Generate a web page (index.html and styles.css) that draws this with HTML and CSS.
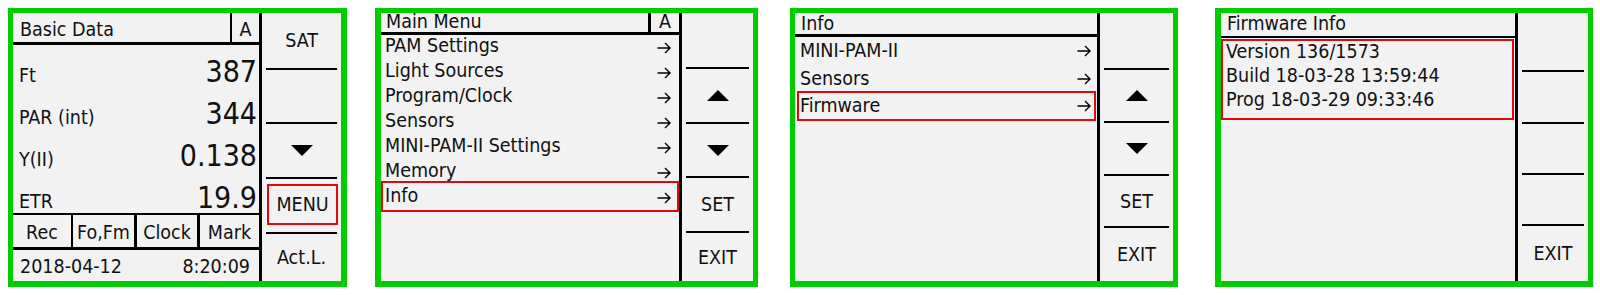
FILE: index.html
```html
<!DOCTYPE html>
<html>
<head>
<meta charset="utf-8">
<link rel="stylesheet" href="styles.css">
</head>
<body>
<div class="screens">
  <div class="panel p1">
    <div class="main">
      <div class="head"><span class="title">Basic Data</span><span class="mode">A</span></div>
      <div class="data">
        <div class="drow"><span class="lbl">Ft</span><span class="val">387</span></div>
        <div class="drow"><span class="lbl">PAR (int)</span><span class="val">344</span></div>
        <div class="drow"><span class="lbl">Y(II)</span><span class="val">0.138</span></div>
        <div class="drow"><span class="lbl">ETR</span><span class="val">19.9</span></div>
      </div>
      <div class="btns"><span class="b1">Rec</span><span class="b2">Fo,Fm</span><span class="b3">Clock</span><span class="b4">Mark</span></div>
      <div class="status"><span>2018-04-12</span><span>8:20:09</span></div>
    </div>
    <div class="side">
      <div class="slot">SAT</div><div class="sep"></div>
      <div class="slot"></div><div class="sep"></div>
      <div class="slot"><svg class="tri" width="22" height="11" viewBox="0 0 22 11"><polygon points="0,0 22,0 11,11" fill="#000"/></svg></div><div class="sep"></div>
      <div class="slot"><div class="hl-btn">MENU</div></div><div class="sep"></div>
      <div class="slot">Act.L.</div>
    </div>
  </div>

  <div class="panel p2">
    <div class="main">
      <div class="head"><span class="title">Main Menu</span><span class="mode">A</span></div>
      <div class="list">
        <div class="item"><span>PAM Settings</span><svg class="arr" width="14" height="12" viewBox="0 0 14 12"><path d="M0.5 6H13 M8 1L13 6L8 11" fill="none" stroke="#000" stroke-width="1.4"/></svg></div>
        <div class="item"><span>Light Sources</span><svg class="arr" width="14" height="12" viewBox="0 0 14 12"><path d="M0.5 6H13 M8 1L13 6L8 11" fill="none" stroke="#000" stroke-width="1.4"/></svg></div>
        <div class="item"><span>Program/Clock</span><svg class="arr" width="14" height="12" viewBox="0 0 14 12"><path d="M0.5 6H13 M8 1L13 6L8 11" fill="none" stroke="#000" stroke-width="1.4"/></svg></div>
        <div class="item"><span>Sensors</span><svg class="arr" width="14" height="12" viewBox="0 0 14 12"><path d="M0.5 6H13 M8 1L13 6L8 11" fill="none" stroke="#000" stroke-width="1.4"/></svg></div>
        <div class="item"><span>MINI-PAM-II Settings</span><svg class="arr" width="14" height="12" viewBox="0 0 14 12"><path d="M0.5 6H13 M8 1L13 6L8 11" fill="none" stroke="#000" stroke-width="1.4"/></svg></div>
        <div class="item"><span>Memory</span><svg class="arr" width="14" height="12" viewBox="0 0 14 12"><path d="M0.5 6H13 M8 1L13 6L8 11" fill="none" stroke="#000" stroke-width="1.4"/></svg></div>
        <div class="item sel"><span>Info</span><svg class="arr" width="14" height="12" viewBox="0 0 14 12"><path d="M0.5 6H13 M8 1L13 6L8 11" fill="none" stroke="#000" stroke-width="1.4"/></svg></div>
      </div>
    </div>
    <div class="side">
      <div class="slot"></div><div class="sep"></div>
      <div class="slot"><svg class="tri" width="22" height="11" viewBox="0 0 22 11"><polygon points="0,11 22,11 11,0" fill="#000"/></svg></div><div class="sep"></div>
      <div class="slot"><svg class="tri" width="22" height="11" viewBox="0 0 22 11"><polygon points="0,0 22,0 11,11" fill="#000"/></svg></div><div class="sep"></div>
      <div class="slot">SET</div><div class="sep"></div>
      <div class="slot">EXIT</div>
    </div>
  </div>

  <div class="panel p3">
    <div class="main">
      <div class="head"><span class="title">Info</span></div>
      <div class="list">
        <div class="item"><span>MINI-PAM-II</span><svg class="arr" width="14" height="12" viewBox="0 0 14 12"><path d="M0.5 6H13 M8 1L13 6L8 11" fill="none" stroke="#000" stroke-width="1.4"/></svg></div>
        <div class="item"><span>Sensors</span><svg class="arr" width="14" height="12" viewBox="0 0 14 12"><path d="M0.5 6H13 M8 1L13 6L8 11" fill="none" stroke="#000" stroke-width="1.4"/></svg></div>
        <div class="item sel"><span>Firmware</span><svg class="arr" width="14" height="12" viewBox="0 0 14 12"><path d="M0.5 6H13 M8 1L13 6L8 11" fill="none" stroke="#000" stroke-width="1.4"/></svg></div>
      </div>
    </div>
    <div class="side">
      <div class="slot"></div><div class="sep"></div>
      <div class="slot"><svg class="tri" width="22" height="11" viewBox="0 0 22 11"><polygon points="0,11 22,11 11,0" fill="#000"/></svg></div><div class="sep"></div>
      <div class="slot"><svg class="tri" width="22" height="11" viewBox="0 0 22 11"><polygon points="0,0 22,0 11,11" fill="#000"/></svg></div><div class="sep"></div>
      <div class="slot">SET</div><div class="sep"></div>
      <div class="slot">EXIT</div>
    </div>
  </div>

  <div class="panel p4">
    <div class="main">
      <div class="head"><span class="title">Firmware Info</span></div>
      <div class="fwbox">
        <div class="fwline">Version 136/1573</div>
        <div class="fwline">Build 18-03-28 13:59:44</div>
        <div class="fwline">Prog 18-03-29 09:33:46</div>
      </div>
    </div>
    <div class="side">
      <div class="slot"></div><div class="sep"></div>
      <div class="slot"></div><div class="sep"></div>
      <div class="slot"></div><div class="sep"></div>
      <div class="slot"></div><div class="sep"></div>
      <div class="slot">EXIT</div>
    </div>
  </div>
</div>
</body>
</html>
```

FILE: styles.css
```css
body {
  margin: 0;
  background: #ffffff;
  font-family: "DejaVu Sans Condensed", "DejaVu Sans", sans-serif;
  font-stretch: condensed;
  font-size: 19.5px;
  color: #111;
}

.screens {
  display: flex;
  align-items: flex-start;
  padding-top: 8px;
}

.panel {
  display: flex;
  box-sizing: border-box;
  height: 279px;
  border-style: solid;
  border-color: #0c0;
  background: #f2f2f2;
}

.p1 { margin-left: 8px; width: 339px; border-width: 5px 6px 6px 5px; }
.p2 { margin-left: 28px; width: 383px; border-width: 5px 5px 6px 6px; }
.p3 { margin-left: 32px; width: 388px; border-width: 5px 5px 6px 5px; }
.p4 { margin-left: 37px; width: 378px; border-width: 5px 5px 6px 6px; }

.main {
  box-sizing: border-box;
  border-right: 3px solid #000;
  display: flex;
  flex-direction: column;
}
.p1 .main { width: 249px; }
.p2 .main { width: 301px; }
.p3 .main { width: 305px; }
.p4 .main { width: 297px; }

/* headers */
.head {
  display: flex;
  flex: none;
}
.title { flex: 1; white-space: nowrap; }
.mode { text-align: center; }

.p1 .head { height: 29px; border-bottom: 3px solid #000; }
.p1 .title { padding: 5px 0 0 7px; line-height: 24px; }
.p1 .mode { width: 27px; border-left: 2px solid #000; padding-top: 5px; line-height: 24px; }

.p2 .head { height: 19px; border-bottom: 3px solid #000; }
.p2 .title { padding-left: 5px; line-height: 17px; }
.p2 .mode { width: 28px; border-left: 3px solid #000; line-height: 17px; }

.p3 .head { height: 21px; border-bottom: 3px solid #000; }
.p3 .title { padding-left: 6px; line-height: 21px; }

.p4 .head { height: 23px; border-bottom: 2px solid #000; }
.p4 .title { padding-left: 6px; line-height: 21px; }

/* basic data */
.data { flex: none; }
.drow {
  box-sizing: border-box;
  height: 42px;
  padding: 12px 2px 0 6px;
  display: flex;
  justify-content: space-between;
  align-items: baseline;
}
.lbl { line-height: 20px; }
.val { font-size: 30px; line-height: 30px; }

.btns {
  display: flex;
  height: 32px;
  border-top: 2px solid #000;
  border-bottom: 3px solid #000;
}
.btns span {
  text-align: center;
  padding-top: 4px;
  line-height: 28px;
  white-space: nowrap;
}
.b1 { width: 58px; }
.b2 { width: 61px; border-left: 2px solid #000; }
.b3 { width: 60px; border-left: 3px solid #000; }
.b4 { flex: 1; border-left: 3px solid #000; }

.status {
  display: flex;
  justify-content: space-between;
  padding: 2px 9px 0 7px;
  line-height: 29px;
}

/* menu lists */
.list { display: flex; flex-direction: column; }
.item {
  box-sizing: border-box;
  display: flex;
  justify-content: space-between;
  align-items: center;
  white-space: nowrap;
}
.arr { display: block; flex: none; }

.p2 .item { height: 25px; line-height: 21px; padding: 0 8px 0 4px; }
.p2 .item span { align-self: flex-start; }
.p2 .item.sel {
  height: 31px;
  margin-top: -4px;
  border: 2px solid #e10a0a;
  padding: 2px 6px 0 2px;
}

.p3 .item { height: 28px; line-height: 28px; padding: 0 6px 0 5px; }
.p3 .item.sel {
  height: 30px;
  margin: -2px 1px 0 2px;
  border: 2px solid #e10a0a;
  line-height: 26px;
  padding: 0 3px 0 1px;
}

.fwbox {
  box-sizing: border-box;
  height: 81px;
  margin: 1px 1px 0 0;
  border: 2px solid #e10a0a;
  padding-left: 3px;
}
.fwline { height: 24px; line-height: 21px; white-space: nowrap; }

/* right soft-key column */
.side { flex: 1; display: grid; }
.p1 .side { grid-template-rows: 55px 2px 52px 2px 53px 2px 53px 2px 1fr; }
.p2 .side { grid-template-rows: 54px 2px 53px 2px 52px 2px 53px 2px 1fr; }
.p3 .side { grid-template-rows: 55px 2px 51px 2px 51px 2px 50px 2px 1fr; }
.p4 .side { grid-template-rows: 57px 2px 50px 2px 49px 2px 49px 2px 1fr; }

.sep { background: #000; margin: 0 4px 0 4px; }
.slot {
  display: flex;
  align-items: center;
  justify-content: center;
  min-height: 0;
}
.p1 .slot:nth-child(7) { align-items: stretch; justify-content: stretch; }
.hl-btn {
  flex: 1;
  margin: 5px 3px 7px 5px;
  border: 2px solid #e10a0a;
  display: flex;
  align-items: center;
  justify-content: center;
}
.tri { display: block; }
```
